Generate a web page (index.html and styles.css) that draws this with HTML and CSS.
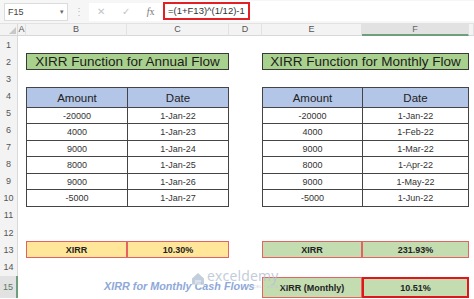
FILE: index.html
```html
<!DOCTYPE html>
<html lang="en">
<head>
  <meta charset="UTF-8">
  <title>XIRR for Monthly Cash Flows</title>
  <link rel="stylesheet" href="styles.css">
</head>
<body>

<!-- formula bar -->
<div class="fbar">
  <div class="namebox">F15 <span class="caret">&#9662;</span></div>
  <div class="dots">&#8942;</div>
  <div class="btns">
    <span class="cancel">&#10005;</span>
    <span class="ok">&#10003;</span>
    <span class="fx"><i>f</i>x</span>
  </div>
  <div class="input">
    <span class="formula">=(1+F13)^(1/12)-1</span>
  </div>
</div>

<!-- sheet -->
<div class="sheet">
  <div class="corner"><span></span></div>
  <div class="colhead">A</div>
  <div class="colhead">B</div>
  <div class="colhead">C</div>
  <div class="colhead">D</div>
  <div class="colhead">E</div>
  <div class="colhead sel">F</div>
  <div class="colhead"></div>

  <div class="rowhead r1">1</div>
  <div class="rowhead r2">2</div>
  <div class="rowhead r3">3</div>
  <div class="rowhead r4">4</div>
  <div class="rowhead r5">5</div>
  <div class="rowhead r6">6</div>
  <div class="rowhead r7">7</div>
  <div class="rowhead r8">8</div>
  <div class="rowhead r9">9</div>
  <div class="rowhead r10">10</div>
  <div class="rowhead r11">11</div>
  <div class="rowhead r12">12</div>
  <div class="rowhead r13">13</div>
  <div class="rowhead r14">14</div>
  <div class="rowhead r15 sel">15</div>

  <div class="title left">XIRR Function for Annual Flow</div>
  <div class="title right">XIRR Function for Monthly Flow</div>

  <table class="data left">
    <tr><th>Amount</th><th>Date</th></tr>
    <tr><td>-20000</td><td>1-Jan-22</td></tr>
    <tr><td>4000</td><td>1-Jan-23</td></tr>
    <tr><td>9000</td><td>1-Jan-24</td></tr>
    <tr><td>8000</td><td>1-Jan-25</td></tr>
    <tr><td>9000</td><td>1-Jan-26</td></tr>
    <tr><td>-5000</td><td>1-Jan-27</td></tr>
  </table>

  <table class="data right">
    <tr><th>Amount</th><th>Date</th></tr>
    <tr><td>-20000</td><td>1-Jan-22</td></tr>
    <tr><td>4000</td><td>1-Feb-22</td></tr>
    <tr><td>9000</td><td>1-Mar-22</td></tr>
    <tr><td>8000</td><td>1-Apr-22</td></tr>
    <tr><td>9000</td><td>1-May-22</td></tr>
    <tr><td>-5000</td><td>1-Jun-22</td></tr>
  </table>

  <div class="res yellow cb">XIRR</div>
  <div class="res yellow cc">10.30%</div>
  <div class="res green ce">XIRR</div>
  <div class="res green cf">231.93%</div>

  <div class="res green ce r15c">XIRR (Monthly)</div>
  <div class="res green cf r15c active">10.51%</div>

  <!-- watermark over the sheet -->
  <div class="caption">XIRR for Monthly Cash Flows</div>
  <div class="logo">
    <svg width="14" height="13" viewBox="0 0 14 13">
      <path d="M1 6.5 L7 1 L13 6.5 L13 12.5 L1 12.5 Z" fill="#b9c6d6"/>
      <path d="M4 12.5 L4 8 L10 8 L10 12.5" fill="#d6dee8"/>
    </svg>
    <div class="brand">
      <span class="name">exceldemy</span>
      <span class="tag">EXCEL &middot; DATA &middot; BI</span>
    </div>
  </div>
</div>

</body>
</html>
```

FILE: styles.css
```css
* { margin: 0; padding: 0; box-sizing: border-box; }
body { width: 474px; height: 299px; overflow: hidden; background: #fff;
  font-family: "Liberation Sans", Arial, sans-serif; color: #222; }

/* formula bar */
.fbar { height: 24px; display: flex; align-items: center;
  background: #f6f6f6; border-bottom: 1px solid #e2e2e2; padding: 0 0 0 4px; }
.namebox { width: 64px; height: 18px; background: #fff; border: 1px solid #dcdcdc;
  font-size: 9px; color: #444; display: flex; align-items: center;
  justify-content: space-between; padding: 0 3px 0 3px; }
.namebox .caret { font-size: 7px; color: #666; }
.dots { width: 21px; text-align: center; color: #b8b8b8; font-size: 10px; }
.btns { width: 74px; height: 18px; background: #fff; display: flex;
  align-items: center; justify-content: space-around; color: #c4c4c4; font-size: 10px; }
.btns .fx { color: #777; font-family: "Liberation Serif", serif; font-size: 10px; }
.input { flex: 1; height: 20px; background: #fff; display: flex; align-items: center;
  margin-top: -2px; }
.formula { border: 2px solid #e31f26; height: 18px; padding: 0 3px;
  font-size: 9.5px; color: #333; display: flex; align-items: center; width: 87px; }

/* sheet grid */
.sheet { position: relative; display: grid;
  grid-template-columns: 18px 8px 101px 102px 33px 100px 107px 1fr;
  grid-template-rows: 12px repeat(12, 17.1px) 17px 18px 22px; }
.corner { background: #f3f3f3; border-bottom: 1px solid #d8d8d8; border-right: 1px solid #d8d8d8;
  position: relative; }
.corner span { position: absolute; right: 1px; bottom: 1px; width: 0; height: 0;
  border-left: 7px solid transparent; border-bottom: 7px solid #c8c8c8; }
.colhead { background: #f3f3f3; border-bottom: 1px solid #d8d8d8; border-right: 1px solid #e2e2e2;
  font-size: 9px; color: #555; text-align: center; line-height: 11px; }
.colhead.sel { background: #e2e2e2; border-bottom: 2px solid #6f9e7c; color: #666; }
.rowhead { grid-column: 1; background: #f3f3f3; border-right: 1px solid #d8d8d8;
  font-size: 9px; color: #555; display: flex; align-items: center; justify-content: center; }
.rowhead.sel { background: #e2e2e2; border-right: 2px solid #6f9e7c; color: #5b7a62; }
.r1 { grid-row: 2; } .r2 { grid-row: 3; } .r3 { grid-row: 4; } .r4 { grid-row: 5; }
.r5 { grid-row: 6; } .r6 { grid-row: 7; } .r7 { grid-row: 8; } .r8 { grid-row: 9; }
.r9 { grid-row: 10; } .r10 { grid-row: 11; } .r11 { grid-row: 12; } .r12 { grid-row: 13; }
.r13 { grid-row: 14; } .r14 { grid-row: 15; } .r15 { grid-row: 16; }

/* titles */
.title { grid-row: 3; background: #a9d18e; border: 1.5px solid #3a3a3a;
  font-size: 13.5px; color: #1c1c1c; display: flex; align-items: center; justify-content: center; }
.title.left { grid-column: 3 / 5; }
.title.right { grid-column: 6 / 8; }

/* tables */
.data { grid-row: 5 / 12; width: 100%; height: 100%; border-collapse: collapse;
  table-layout: fixed; border: 1.5px solid #333; }
.data.left { grid-column: 3 / 5; }
.data.right { grid-column: 6 / 8; }
.data th, .data td { border: 1px solid #444; text-align: center; }
.data th { background: #b4c6e7; font-weight: normal; font-size: 11.5px; color: #222; }
.data td { font-size: 9px; color: #333; }
.data.left th:first-child, .data.left td:first-child { width: 101px; }
.data.right th:first-child, .data.right td:first-child { width: 100px; }

/* result cells */
.res { grid-row: 14; font-size: 9px; font-weight: bold; color: #222;
  display: flex; align-items: center; justify-content: center; border: 1px solid #e36262; }
.yellow { background: #ffe699; }
.green { background: #c3dcb0; }
.cb { grid-column: 3; } .cc { grid-column: 4; }
.ce { grid-column: 6; } .cf { grid-column: 7; }
.r15c { grid-row: 16; margin-top: 1px; }
.res.active { border: 2.5px solid #e0161c; }

/* watermark */
.caption { position: absolute; left: 104px; top: 256px; font-size: 10.8px;
  font-style: italic; font-weight: bold; color: #8ea8d8; }
.logo { position: absolute; left: 191px; top: 245px; display: flex; align-items: flex-start;
  gap: 2px; opacity: 0.85; }
.logo svg { margin-top: 3px; }
.brand { display: flex; flex-direction: column; line-height: 1; }
.brand .name { font-family: "Open Sans", sans-serif; font-size: 14px; color: #b7c3d3;
  letter-spacing: 0.2px; line-height: 14px; }
.brand .tag { font-size: 4px; color: #c4ccd8; letter-spacing: 0.4px; margin-left: 40px; margin-top: 2px; }
```
